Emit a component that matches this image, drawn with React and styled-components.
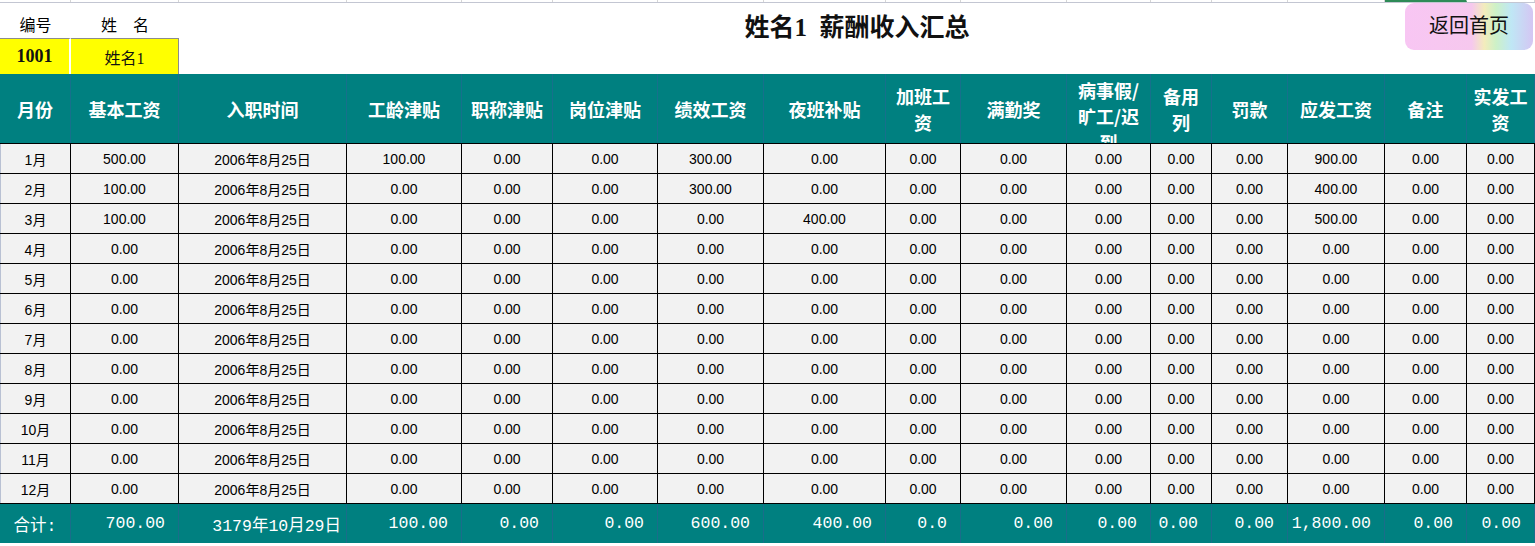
import React from "react";
import styled, { createGlobalStyle } from "styled-components";

const COLS =
  "71px 108px 168px 115px 91px 105px 106px 122px 75px 106px 84px 61px 76px 97px 82px 68px";

const GlobalStyle = createGlobalStyle`
  html, body {
    margin: 0;
    padding: 0;
    background: #fff;
    overflow: hidden;
  }
  * {
    box-sizing: border-box;
  }
`;

const Sheet = styled.div`
  position: relative;
  width: 1535px;
  height: 546px;
  background: #fff;
  font-family: "Liberation Sans", "Noto Sans CJK SC", sans-serif;
`;

const Row = styled.div`
  display: grid;
  grid-template-columns: ${COLS};
  height: ${(p) => p.$h}px;
`;

const GridStrip = styled(Row)`
  border-bottom: 1px solid #c3c6d2;
  & > div {
    border-right: 1px solid #d6d6d6;
  }
  & > div:nth-child(15) {
    border-bottom: 2px solid #2e8b57;
  }
`;

const InfoLabel = styled.div`
  display: flex;
  align-items: center;
  justify-content: center;
  font-family: "Liberation Serif", "Noto Sans CJK SC", serif;
  font-size: 16px;
  color: #000;
  padding-top: 2px;
`;

const Title = styled.div`
  grid-column: 3 / -1;
  display: flex;
  justify-content: center;
  align-items: center;
  padding-top: 4px;
  white-space: pre;
  font-family: "Liberation Serif", "Noto Sans CJK SC", serif;
  font-weight: bold;
  font-size: 25px;
  color: #111;
`;

const IdCell = styled.div`
  display: flex;
  align-items: center;
  justify-content: center;
  background: #ffff00;
  border-top: 1px solid #8c8c8c;
  border-right: ${(p) => (p.$last ? "1px solid #8c8c8c" : "2px solid #fff")};
  font-family: "Liberation Serif", "Noto Sans CJK SC", serif;
  font-size: ${(p) => (p.$bold ? 18 : 16)}px;
  font-weight: ${(p) => (p.$bold ? "bold" : "normal")};
  color: #111;
`;

const HeadRow = styled(Row)`
  background: #008080;
  border-bottom: 1px solid #000;
`;

const HeadCell = styled.div`
  display: flex;
  align-items: ${(p) => (p.$top ? "flex-start" : "center")};
  justify-content: center;
  padding: ${(p) => (p.$top ? "3px 4px 0" : "0 4px")};
  overflow: hidden;
  border-right: 1px solid #17708c;
  text-align: center;
  white-space: pre-line;
  line-height: 26px;
  font-family: "Noto Sans CJK SC", sans-serif;
  font-weight: bold;
  font-size: 18px;
  color: #fff;
`;

const DataRow = styled(Row)`
  background: #f2f2f2;
  border-bottom: 1px solid #000;
`;

const DataCell = styled.div`
  display: flex;
  align-items: center;
  justify-content: center;
  border-right: 1px solid #000;
  font-size: 14px;
  color: #000;
  &:first-child {
    border-left: 1px solid #b9c1d3;
  }
`;

const FootRow = styled(Row)`
  background: #008080;
`;

const FootCell = styled.div`
  display: flex;
  align-items: center;
  justify-content: ${(p) => (p.$center ? "center" : "flex-end")};
  padding-right: ${(p) => (p.$center ? 0 : p.$pad ?? 13)}px;
  border-right: 1px solid #1a6d8a;
  font-family: "Liberation Mono", "Noto Sans CJK SC", monospace;
  font-size: 16.5px;
  color: #fff;
  white-space: pre;
`;

const HomeButton = styled.button`
  position: absolute;
  top: 3px;
  left: 1405px;
  width: 128px;
  height: 47px;
  border: none;
  border-radius: 9px;
  background: linear-gradient(
    90deg,
    #f8c6f3 0%,
    #f6c8ee 52%,
    #f3ecbc 62%,
    #cdf1c7 71%,
    #bfe7f5 83%,
    #d4c6f3 100%
  );
  font-family: "Liberation Serif", "Noto Sans CJK SC", serif;
  font-size: 20px;
  color: #111;
  padding: 0 0 4px;
  cursor: pointer;
`;

const headers = [
  { label: "月份" },
  { label: "基本工资" },
  { label: "入职时间" },
  { label: "工龄津贴" },
  { label: "职称津贴" },
  { label: "岗位津贴" },
  { label: "绩效工资" },
  { label: "夜班补贴" },
  { label: "加班工\n资" },
  { label: "满勤奖" },
  { label: "病事假/\n旷工/迟\n到", top: true },
  { label: "备用\n列" },
  { label: "罚款" },
  { label: "应发工资" },
  { label: "备注" },
  { label: "实发工\n资" },
];

const fmt = (n) => n.toFixed(2);

const rows = Array.from({ length: 12 }, (_, i) => {
  const base = [500, 100, 100][i] ?? 0;
  const seniority = i === 0 ? 100 : 0;
  const perf = i < 2 ? 300 : 0;
  const night = i === 2 ? 400 : 0;
  const gross = base + seniority + perf + night;
  return [
    `${i + 1}月`,
    fmt(base),
    "2006年8月25日",
    fmt(seniority),
    fmt(0),
    fmt(0),
    fmt(perf),
    fmt(night),
    fmt(0),
    fmt(0),
    fmt(0),
    fmt(0),
    fmt(0),
    fmt(gross),
    fmt(0),
    fmt(0),
  ];
});

const totals = [
  "700.00",
  "3179年10月29日",
  "100.00",
  "0.00",
  "0.00",
  "600.00",
  "400.00",
  "0.0",
  "0.00",
  "0.00",
  "0.00",
  "0.00",
  "1,800.00",
  "0.00",
  "0.00",
];

const App = () => {
  return (
    <Sheet>
      <GlobalStyle />
      <GridStrip $h={3}>
        {headers.map((_, i) => (
          <div key={i} />
        ))}
      </GridStrip>
      <Row $h={35}>
        <InfoLabel>编号</InfoLabel>
        <InfoLabel>姓　名</InfoLabel>
        <Title>{"姓名1  薪酬收入汇总"}</Title>
      </Row>
      <Row $h={36}>
        <IdCell $bold>1001</IdCell>
        <IdCell $last>姓名1</IdCell>
      </Row>
      <HeadRow $h={70}>
        {headers.map((h) => (
          <HeadCell key={h.label} $top={h.top}>
            {h.label}
          </HeadCell>
        ))}
      </HeadRow>
      {rows.map((r, i) => (
        <DataRow key={i} $h={30}>
          {r.map((v, j) => (
            <DataCell key={j}>{v}</DataCell>
          ))}
        </DataRow>
      ))}
      <FootRow $h={39}>
        <FootCell $center>合计:</FootCell>
        {totals.map((t, i) => (
          <FootCell key={i} $pad={i === 1 ? 5 : 13}>
            {t}
          </FootCell>
        ))}
      </FootRow>
      <HomeButton>返回首页</HomeButton>
    </Sheet>
  );
};

export default App;
